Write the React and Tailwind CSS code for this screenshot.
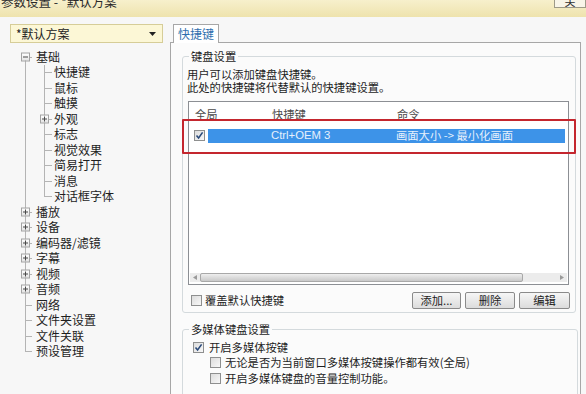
import React from "react"

const tree = [
  { label: "基础", level: 0, exp: "-" },
  { label: "快捷键", level: 1 },
  { label: "鼠标", level: 1 },
  { label: "触摸", level: 1 },
  { label: "外观", level: 1, exp: "+" },
  { label: "标志", level: 1 },
  { label: "视觉效果", level: 1 },
  { label: "简易打开", level: 1 },
  { label: "消息", level: 1 },
  { label: "对话框字体", level: 1, lastChild: true },
  { label: "播放", level: 0, exp: "+" },
  { label: "设备", level: 0, exp: "+" },
  { label: "编码器/滤镜", level: 0, exp: "+" },
  { label: "字幕", level: 0, exp: "+" },
  { label: "视频", level: 0, exp: "+" },
  { label: "音频", level: 0, exp: "+" },
  { label: "网络", level: 0 },
  { label: "文件夹设置", level: 0 },
  { label: "文件关联", level: 0 },
  { label: "预设管理", level: 0 },
]

function Expander({ sign, className }) {
  return (
    <div className={`absolute top-1/2 -translate-y-1/2 w-[9px] h-[9px] border border-[#a3a3a3] bg-gradient-to-b from-white to-[#e4e4e4] flex items-center justify-center ${className}`}>
      <div className="relative w-[5px] h-[5px]">
        <div className="absolute left-0 right-0 top-[2px] h-px bg-[#4a4a4a]" />
        {sign === "+" && <div className="absolute top-0 bottom-0 left-[2px] w-px bg-[#4a4a4a]" />}
      </div>
    </div>
  )
}

function TreeRow({ item, index }) {
  const first = index === 0
  const last = index === tree.length - 1
  return (
    <div className="flex items-center h-[15.5px]">
      <div className="w-[18px] shrink-0" />
      {/* root column */}
      <div className="relative w-[14px] h-full shrink-0">
        <div className={`absolute left-[7px] w-px bg-[#b4b4b4] ${first ? "top-1/2" : "top-0"} ${last ? "bottom-1/2" : "bottom-0"}`} />
        {item.level === 0 && <div className="absolute left-[7px] right-0 top-1/2 h-px bg-[#b4b4b4]" />}
        {item.level === 0 && item.exp && <Expander sign={item.exp} className="left-[3px]" />}
      </div>
      {item.level === 1 && (
        <div className="relative w-[20px] h-full shrink-0">
          <div className={`absolute left-[12px] w-px bg-[#b4b4b4] top-0 ${item.lastChild ? "bottom-1/2" : "bottom-0"}`} />
          <div className="absolute left-[12px] right-0 top-1/2 h-px bg-[#b4b4b4]" />
          {item.exp && <Expander sign={item.exp} className="left-[8px]" />}
        </div>
      )}
      <span className={`${item.level === 0 ? "ml-[4px]" : "ml-[2px]"} text-[12px] leading-[14px] text-[#1e1e1e] whitespace-nowrap`}>
        {item.label}
      </span>
    </div>
  )
}

function Checkbox({ checked }) {
  return (
    <div className="w-[11px] h-[11px] shrink-0 border border-[#8e8f8f] bg-gradient-to-br from-[#dcdcdc] to-[#f8f8f8] flex items-center justify-center">
      {checked && (
        <svg width="9" height="9" viewBox="0 0 9 9">
          <path d="M1.5 4.5 L3.6 7 L7.6 1.4" fill="none" stroke="#2b4a7a" strokeWidth="1.6" />
        </svg>
      )}
    </div>
  )
}

function Button({ children, w }) {
  return (
    <button className={`${w} h-[17px] rounded-[2px] border border-[#8a8a8a] bg-gradient-to-b from-[#f6f6f6] to-[#dcdcdc] text-[11.3px] leading-[15px] text-[#1e1e1e] flex items-center justify-center`}>
      {children}
    </button>
  )
}

export default function App() {
  return (
    <div className="w-[586px] h-[394px] overflow-hidden bg-[#f7f7f7] font-['Noto_Sans_CJK_SC','Noto_Sans',sans-serif]">
      {/* title bar */}
      <div className="h-[17px] bg-gradient-to-b from-[#f7f0cc] to-[#eee3ad] flex justify-between overflow-hidden">
        <div className="text-[12.5px] leading-[13px] -mt-[5px] pl-[1px] text-[#2a2a2a] whitespace-nowrap">参数设置 - *默认方案</div>
        <div className="w-[32px] h-[9px] -mt-px border border-[#9d9a88] bg-[#f8f5e8] overflow-hidden flex justify-center">
          <span className="text-[11px] leading-[11px] -mt-[4px] text-[#333]">关</span>
        </div>
      </div>

      <div className="flex pt-[7px]">
        {/* left column */}
        <div className="w-[170px] shrink-0">
          <div className="ml-[10px] w-[153px] h-[19px] border border-[#d6cd98] bg-[#fcf7d6] flex items-center justify-between pl-[5px] pr-[6px]">
            <span className="text-[12px] leading-[14px] text-[#222]">*默认方案</span>
            <svg width="7" height="4" viewBox="0 0 7 4"><path d="M0 0 H7 L3.5 4 Z" fill="#222" /></svg>
          </div>
          <div className="mt-[6px]">
            {tree.map((item, i) => (
              <TreeRow key={item.label} item={item} index={i} />
            ))}
          </div>
        </div>

        {/* right column */}
        <div className="w-[411px] shrink-0 flex flex-col">
          <div className="ml-[3px] w-[46px] h-[19px] border border-b-0 border-[#a7a7a7] bg-white flex items-center justify-center -mb-px relative">
            <span className="text-[12px] leading-[14px] text-[#2f6fae]">快捷键</span>
          </div>
          <div className="h-[360px] border border-[#a7a7a7] bg-[#fbfbfb] pl-[11px] pr-[3px] pt-[7px]">
            {/* keyboard group */}
            <fieldset className="w-[394px] h-[263px] border border-[#d4dadd] rounded-[3px] flex flex-col pl-[4px] pr-[5px]">
              <legend className="ml-[2px] px-[2px] text-[11.3px] leading-[13px] text-[#1e1e1e]">键盘设置</legend>
              <div className="mt-[5px] text-[11.3px] leading-[13px] text-[#1e1e1e]">
                <div>用户可以添加键盘快捷键。</div>
                <div>此处的快捷键将代替默认的快捷键设置。</div>
              </div>
              <div className="relative mt-[7px] ml-px w-[381px] h-[184px] border border-[#8c8f94] bg-white flex flex-col">
                <div className="flex pt-[6px] h-[26px] text-[11.3px] leading-[13px] text-[#4b4b4b]">
                  <span className="ml-[6px] w-[77px]">全局</span>
                  <span className="w-[125px]">快捷键</span>
                  <span>命令</span>
                </div>
                <div className="flex items-center h-[15px]">
                  <div className="ml-[5px]"><Checkbox checked /></div>
                  <div className="ml-[3px] w-[357px] h-[14px] bg-[#3d93e8] flex items-center text-[11.3px] leading-[13px] text-[#e6f0fc]">
                    <span className="ml-[63px] w-[125px] font-['Liberation_Sans',sans-serif]">Ctrl+OEM 3</span>
                    <span>画面大小 -&gt; 最小化画面</span>
                  </div>
                </div>
                <div className="flex-1" />
                {/* horizontal scrollbar */}
                <div className="mx-px mb-[2px] h-[9px] flex items-stretch bg-[#ececec]">
                  <div className="w-[10px] flex items-center justify-center">
                    <svg width="4" height="5" viewBox="0 0 4 5"><path d="M4 0 V5 L0 2.5 Z" fill="#9a9a9a" /></svg>
                  </div>
                  <div className="w-[323px] rounded-[2px] border border-[#a8a8a8] bg-gradient-to-b from-[#eeeeee] to-[#c9c9c9]" />
                  <div className="flex-1" />
                  <div className="w-[10px] flex items-center justify-center">
                    <svg width="4" height="5" viewBox="0 0 4 5"><path d="M0 0 V5 L4 2.5 Z" fill="#9a9a9a" /></svg>
                  </div>
                </div>
                {/* highlight overlay */}
                <div className="absolute left-[-7px] top-[17px] w-[394px] h-[35px] border-2 border-[#c4262e] rounded-[1px] pointer-events-none" />
              </div>
              <div className="mt-[7px] flex items-center justify-between">
                <div className="flex items-center ml-[4px]">
                  <Checkbox />
                  <span className="ml-[3px] text-[11.3px] leading-[13px] text-[#1e1e1e]">覆盖默认快捷键</span>
                </div>
                <div className="flex gap-[4px]">
                  <Button w="w-[49px]">添加...</Button>
                  <Button w="w-[50px]">删除</Button>
                  <Button w="w-[51px]">编辑</Button>
                </div>
              </div>
            </fieldset>

            {/* multimedia group */}
            <fieldset className="mt-[10px] w-[396px] h-[80px] border border-[#d4dadd] rounded-[3px] pl-[10px]">
              <legend className="-ml-[4px] px-[2px] text-[11.3px] leading-[13px] text-[#1e1e1e]">多媒体键盘设置</legend>
              <div className="mt-[4px] flex flex-col text-[11.3px] leading-[13px] text-[#1e1e1e]">
                <div className="flex items-center h-[15px]">
                  <Checkbox checked />
                  <span className="ml-[5px]">开启多媒体按键</span>
                </div>
                <div className="flex items-center h-[15px] ml-[17px]">
                  <Checkbox />
                  <span className="ml-[4px]">无论是否为当前窗口多媒体按键操作都有效(全局)</span>
                </div>
                <div className="flex items-center h-[16px] ml-[17px]">
                  <Checkbox />
                  <span className="ml-[4px]">开启多媒体键盘的音量控制功能。</span>
                </div>
              </div>
            </fieldset>
          </div>
        </div>
      </div>
    </div>
  )
}
